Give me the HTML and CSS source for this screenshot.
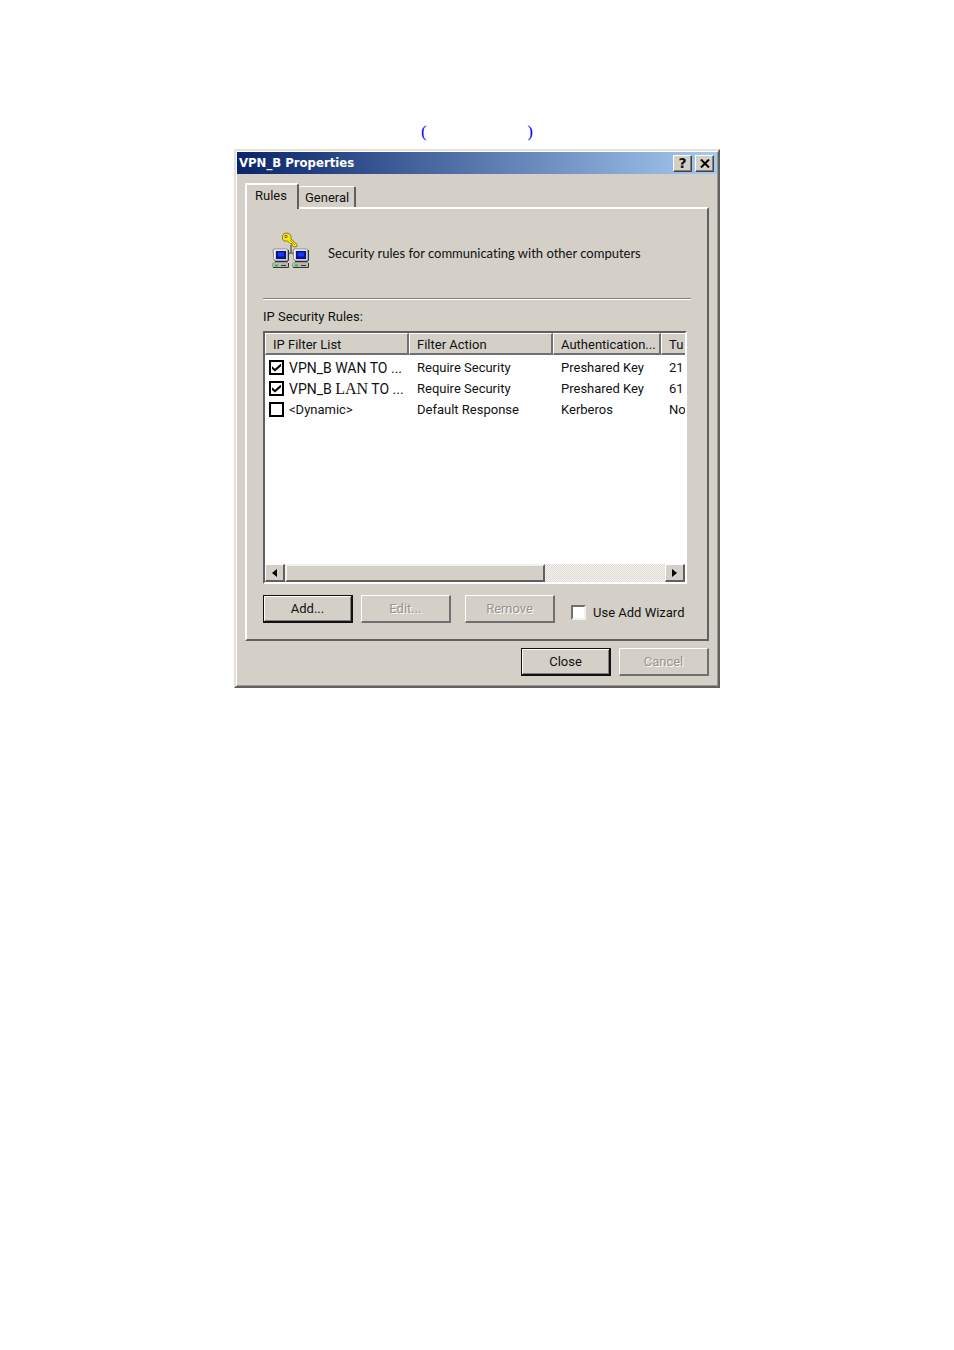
FILE: index.html
```html
<!DOCTYPE html>
<html lang="en">
<head>
<meta charset="utf-8">
<title>VPN_B Properties</title>
<link rel="stylesheet" href="styles.css">
</head>
<body>
<main class="page">
  <p class="caption"><span>(</span><span>)</span></p>
  <section class="dialog" aria-labelledby="dialog-title">
    <header class="titlebar">
      <h1 class="title" id="dialog-title">VPN_B Properties</h1>
      <button class="tool" type="button" aria-label="Help">?</button>
      <button class="tool" type="button" aria-label="Close window">
        <svg width="10" height="9" viewBox="0 0 10 9"><path d="M1 0.5 9 8.5M9 0.5 1 8.5" stroke="#000" stroke-width="2"/></svg>
      </button>
    </header>
    <div class="content">
      <div class="tabs" role="tablist">
        <button class="tab tab-active" type="button" role="tab" aria-selected="true">Rules</button>
        <button class="tab" type="button" role="tab" aria-selected="false">General</button>
      </div>
      <div class="panel" role="tabpanel">
        <div class="intro">
          <svg class="intro-icon" width="38" height="37" viewBox="0 0 38 37" aria-hidden="true">
            <path d="M19 13V21M16 22.500 18 21H20L22 22.500" stroke="#666" stroke-width="1.500" fill="none"/>
            <path d="M12 1.500 16 1 19 3.500V7L25 12.500V14.500L22 15 20 13V11.500H18L15.500 9H12L10.500 7V4Z" fill="#f5e814" stroke="#8a8210"/>
            <path d="M13 3.500H15V5.500H13Z" fill="#fff" stroke="#77700c"/>
            <path d="M18 8 23 13" stroke="#a89d10"/>
            <g id="computer">
              <path d="M1 18 2 17H15L16 18V28L15 29H3L2 28Z" fill="#d0d0d0" stroke="#888"/>
              <path d="M2.500 27V18H15" stroke="#f4f4f4" fill="none"/>
              <path d="M16.500 18V28L15.500 29.500H3" stroke="#333" fill="none"/>
              <path d="M4 19H14V27H4Z" fill="#0a128c"/>
              <path d="M6 20.500H12V24.500H6Z" fill="#1838ff"/>
              <path d="M1 31H17V35.500H1Z" fill="#b8b8b8"/>
              <path d="M0.500 35V31.500L2 30.500H16" stroke="#999" fill="none"/>
              <path d="M1 35.500H16.500V31" stroke="#333" fill="none"/>
              <path d="M3 32.500H6V34.500H3Z" fill="#10c830"/>
              <path d="M9 33.500H14" stroke="#333"/>
            </g>
            <use href="#computer" x="20"/>
          </svg>
          <p class="text intro-text">Security rules for communicating with other computers</p>
        </div>
        <hr class="rule">
        <p class="text list-label" id="list-label">IP Security Rules:</p>
        <div class="list">
          <div class="list-view">
            <table class="grid" aria-labelledby="list-label">
              <colgroup><col class="col-wide"><col class="col-wide"><col class="col-auth"><col></colgroup>
              <thead>
                <tr><th>IP Filter List</th><th>Filter Action</th><th>Authentication...</th><th>Tu</th></tr>
              </thead>
              <tbody>
                <tr><td><label class="item item-large"><input class="bold-check" type="checkbox" checked>VPN_B WAN TO ...</label></td><td>Require Security</td><td>Preshared Key</td><td>21</td></tr>
                <tr><td><label class="item item-large"><input class="bold-check" type="checkbox" checked><span>VPN_B <span class="serif">LAN</span> TO ...</span></label></td><td>Require Security</td><td>Preshared Key</td><td>61</td></tr>
                <tr><td><label class="item"><input class="bold-check" type="checkbox">&lt;Dynamic&gt;</label></td><td>Default Response</td><td>Kerberos</td><td>No</td></tr>
              </tbody>
            </table>
          </div>
          <div class="scrollbar">
            <button class="arrow" type="button" aria-label="Scroll left"><svg width="5" height="8" viewBox="0 0 5 8"><path d="M5 0V8L0 4Z"/></svg></button>
            <div class="track"><div class="thumb"></div></div>
            <button class="arrow" type="button" aria-label="Scroll right"><svg width="5" height="8" viewBox="0 0 5 8"><path d="M0 0V8L5 4Z"/></svg></button>
          </div>
        </div>
        <div class="actions">
          <button class="btn btn-strong" type="button">Add...</button>
          <button class="btn" type="button" disabled>Edit...</button>
          <button class="btn btn-last" type="button" disabled>Remove</button>
          <label class="wizard"><input class="check" type="checkbox">Use Add Wizard</label>
        </div>
      </div>
      <footer class="footer">
        <button class="btn btn-strong" type="button">Close</button>
        <button class="btn" type="button" disabled>Cancel</button>
      </footer>
    </div>
  </section>
</main>
</body>
</html>
```
FILE: styles.css
```css
* { box-sizing: border-box; }

body {
  margin: 0;
  background: #fff;
  color: #111;
  font: 13px/16px Roboto, "Liberation Sans", sans-serif;
}

button, input { margin: 0; padding: 0; font: inherit; color: inherit; }

.page {
  display: flex;
  flex-direction: column;
  align-items: center;
  padding-top: 123px;
}

.caption {
  display: flex;
  justify-content: space-between;
  width: 112px;
  margin: 0 0 8px;
  color: #00f;
  font: 17px/18px "Liberation Serif", serif;
}

.dialog {
  width: 100%;
  max-width: 486px;
  padding: 1px;
  background: #d4d0c8;
  border: 2px solid;
  border-color: #e4e1d8 #606060 #606060 #e4e1d8;
  box-shadow: inset 1px 1px #fff, inset -1px -1px #9b9890;
}

.titlebar {
  display: flex;
  align-items: center;
  gap: 3px;
  height: 22px;
  padding: 0 3px 0 2px;
  background: linear-gradient(to right, #0a246a, #a6caf0);
}

.title {
  flex: 1;
  margin: 0;
  color: #fff;
  font: bold 13px/20px "DejaVu Sans Condensed", "DejaVu Sans", sans-serif;
}

.tool {
  display: flex;
  align-items: center;
  justify-content: center;
  width: 19px;
  height: 17px;
  background: #d4d0c8;
  border: 1px solid;
  border-color: #fff #404040 #404040 #fff;
  box-shadow: inset -1px -1px #808080;
  font: bold 14px/14px "DejaVu Sans", sans-serif;
}

.content { padding: 9px 8px; }

.tabs { display: flex; align-items: flex-end; }

.tab {
  height: 21px;
  padding: 2px 5px 0 6px;
  background: transparent;
  border: solid;
  border-width: 1px 2px 0 0;
  border-color: #fff #606060 #fff #fff;
  border-radius: 2px 2px 0 0;
}

.tab-active {
  position: relative;
  height: 26px;
  margin-bottom: -2px;
  padding: 0 10px 2px 8px;
  background: #d4d0c8;
  border-width: 2px 2px 0 2px;
}

.panel {
  padding: 23px 16px 16px;
  border: 2px solid;
  border-color: #fff #606060 #606060 #fff;
}

.text { margin: 0; }

.intro {
  display: flex;
  align-items: center;
  gap: 18px;
  padding-left: 9px;
}

.intro-text {
  padding-top: 5px;
  font-family: Lato, Roboto, sans-serif;
  font-variant-ligatures: none;
}

.rule {
  margin: 29px 0 9px;
  border: solid;
  border-width: 1px 0;
  border-color: #808080 transparent #fff;
}

.list {
  margin: 6px 4px 0 0;
  background: #fff;
  border: 2px solid;
  border-color: #606060 #fff #fff #606060;
}

.list-view { height: 231px; overflow: hidden; }

.grid {
  width: 100%;
  table-layout: fixed;
  border-collapse: separate;
  border-spacing: 0;
  white-space: nowrap;
}

.col-wide { width: 144px; }
.col-auth { width: 108px; }

.grid th, .grid td {
  height: 21px;
  padding: 0 0 0 8px;
  overflow: hidden;
  text-align: left;
  font-weight: normal;
}

.grid th {
  height: 22px;
  padding: 2px 0 0 7px;
  background: #d4d0c8;
  border: solid;
  border-width: 1px 2px 2px 1px;
  border-color: #fff #707070 #707070 #fff;
}

.grid th:last-child { border-right: 0; }
.grid td:first-child { padding-left: 4px; }
.grid tbody::before { content: ""; display: table-row; height: 2px; }

.item { display: flex; align-items: center; gap: 5px; }
.item-large { font-size: 14px; }
.serif { font: 16px/14px "Liberation Serif", serif; }

.bold-check, .check {
  display: grid;
  flex: none;
  place-items: center;
  width: 15px;
  height: 15px;
  appearance: none;
  background: #fff;
  border: 2px solid #000;
}

.bold-check:checked::before, .check:checked::before {
  content: "";
  width: 9px;
  height: 8px;
  background: #000;
  clip-path: polygon(0 35%, 33% 65%, 100% 0, 100% 35%, 33% 100%, 0 70%);
}

.check { border-color: #707070 #f4f2ec #f4f2ec #707070; }

.scrollbar { display: flex; height: 18px; }

.arrow {
  display: flex;
  align-items: center;
  justify-content: center;
  width: 20px;
  background: #d4d0c8;
  border: solid;
  border-width: 1px 2px 2px 1px;
  border-color: #fff #606060 #606060 #fff;
}

.track {
  flex: 1;
  background: repeating-conic-gradient(#dedbd4 0 25%, #f4f3f0 0 50%) 0 0 / 2px 2px;
}

.thumb {
  width: 68.5%;
  height: 100%;
  background: #d4d0c8;
  border: 2px solid;
  border-color: #f4f2ec #606060 #606060 #f4f2ec;
}

.actions { display: flex; gap: 8px; margin-top: 11px; }

.btn {
  width: 90px;
  height: 28px;
  background: #d4d0c8;
  border: solid;
  border-width: 1px 2px 2px 1px;
  border-color: #fff #707070 #707070 #fff;
}

.btn:disabled { color: #96938c; text-shadow: 1px 1px #fff; }

.btn-strong {
  border: 2px solid #111;
  border-width: 1px 2px 2px 1px;
  box-shadow: inset 1px 1px #fff, inset -1px -1px #808080;
}

.btn-last { margin-left: 6px; }

.wizard {
  display: flex;
  align-items: center;
  gap: 7px;
  margin: 7px 0 0 8px;
  white-space: nowrap;
}

.footer {
  display: flex;
  justify-content: flex-end;
  gap: 8px;
  margin-top: 7px;
}
```
